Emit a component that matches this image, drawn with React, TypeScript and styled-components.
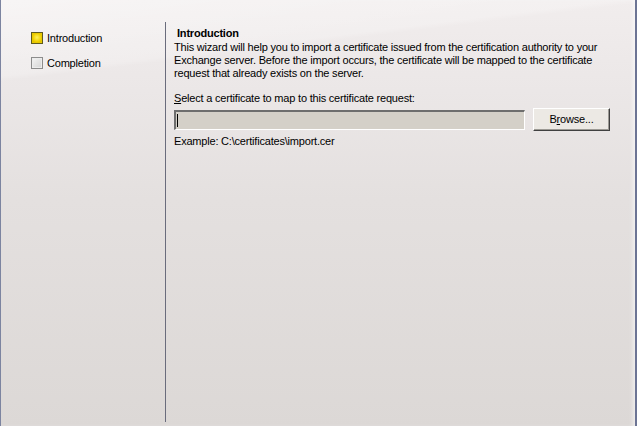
import styled, { createGlobalStyle } from "styled-components"

const GlobalStyle = createGlobalStyle`
    html, body {
        margin: 0;
        padding: 0;
        height: 100%;
    }
    body {
        font-family: "Liberation Sans", Arial, sans-serif;
        font-size: 11px;
        letter-spacing: -0.2px;
        color: #000;
    }
    #root {
        height: 100%;
    }
`

// wizard page: light sheen above a sloping wave, darkening towards the bottom
const Window = styled.div`
    display: flex;
    height: 426px;
    box-sizing: border-box;
    border-left: 1px solid #7c84a0;
    border-right: 2px solid #6c7494;
    box-shadow: inset -4px 0 4px -2px rgba(255, 255, 255, 0.6);
    background:
        linear-gradient(173deg, rgba(255, 255, 255, 0.45) 0px, rgba(255, 255, 255, 0.2) 76px, rgba(255, 255, 255, 0) 81px),
        linear-gradient(to bottom, #f1eded 0px, #ebe7e7 90px, #e4e0df 200px, #dcd8d6 426px);
    overflow: hidden;
`

const Sidebar = styled.ul`
    list-style-type: none;
    margin: 0;
    padding: 31px 0 0 30px;
    width: 134px;
    flex-shrink: 0;
    display: flex;
    flex-direction: column;
    gap: 11px;
`

const Step = styled.li`
    display: flex;
    align-items: center;
    gap: 4px;
    height: 14px;
`

const StepBox = styled.span<{ $active?: boolean }>`
    width: 10px;
    height: 10px;
    border: 1px solid ${(p) => (p.$active ? "#5e5a20" : "#8c8c8c")};
    background: ${(p) =>
        p.$active
            ? "radial-gradient(circle at 50% 45%, #fff25a 0%, #f0d000 55%, #c8a400 100%)"
            : "linear-gradient(135deg, #f4f4f4 0%, #d4d4d4 100%)"};
    box-shadow: inset 0 0 0 1px ${(p) => (p.$active ? "#e8c800" : "#ececec")};
`

const Content = styled.section`
    margin-top: 22px;
    margin-bottom: 4px;
    border-left: 1px solid #6a6c7c;
    box-shadow: 1px 0 0 #fbfafa;
    padding: 5px 25px 0 8px;
    flex: 1;
    display: flex;
    flex-direction: column;
`

const Title = styled.h1`
    margin: 0 0 0 3px;
    font-size: 11px;
    font-weight: bold;
    line-height: 13px;
`

const Paragraph = styled.p`
    margin: 1px 0 0;
    line-height: 13px;
`

const Label = styled.label`
    display: block;
    margin-top: 12px;
    line-height: 13px;
`

const PathRow = styled.div`
    display: flex;
    align-items: center;
    gap: 8px;
    margin-top: 3px;
`

const PathInput = styled.div`
    flex: 1;
    height: 20px;
    box-sizing: border-box;
    background: #d4d0c8;
    border-top: 2px solid #6e6e6e;
    border-left: 2px solid #6e6e6e;
    border-bottom: 1px solid #ffffff;
    border-right: 1px solid #ffffff;
    display: flex;
    align-items: center;
    padding-left: 1px;
`

const Caret = styled.span`
    width: 1px;
    height: 13px;
    background: #000;
`

const Button = styled.button`
    width: 77px;
    height: 23px;
    box-sizing: border-box;
    font: inherit;
    letter-spacing: inherit;
    background: #ece9e4;
    border: 1px solid #ffffff;
    border-right-color: #404040;
    border-bottom-color: #404040;
    box-shadow: inset -1px -1px 0 #9c9a94;
    padding: 0 0 1px;
    color: #000;
`

const Hint = styled.div`
    margin-top: 4px;
    line-height: 13px;
`

export default function App() {
    return (
        <>
            <GlobalStyle />
            <Window>
                <Sidebar>
                    <Step><StepBox $active />Introduction</Step>
                    <Step><StepBox />Completion</Step>
                </Sidebar>
                <Content>
                    <Title>Introduction</Title>
                    <Paragraph>
                        This wizard will help you to import a certificate issued from the certification authority to your
                        Exchange server. Before the import occurs, the certificate will be mapped to the certificate
                        request that already exists on the server.
                    </Paragraph>
                    <Label><u>S</u>elect a certificate to map to this certificate request:</Label>
                    <PathRow>
                        <PathInput><Caret /></PathInput>
                        <Button>B<u>r</u>owse...</Button>
                    </PathRow>
                    <Hint>Example: C:\certificates\import.cer</Hint>
                </Content>
            </Window>
        </>
    )
}
